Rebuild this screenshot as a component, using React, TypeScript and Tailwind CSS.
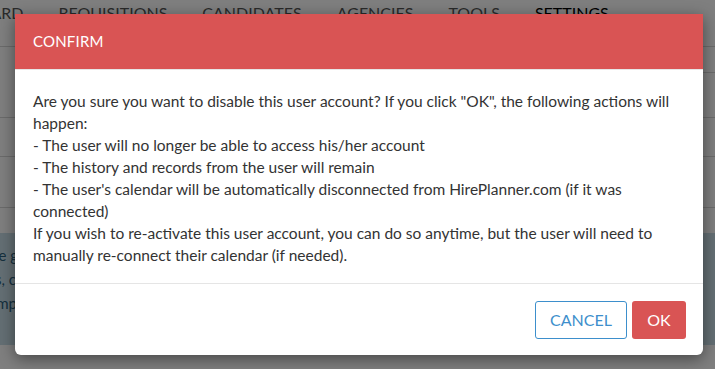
import React from 'react';

const navItems = ['DASHBOARD', 'REQUISITIONS', 'CANDIDATES', 'AGENCIES', 'TOOLS', 'SETTINGS'];

const messageLines = [
  'Are you sure you want to disable this user account? If you click "OK", the following actions will',
  'happen:',
  '- The user will no longer be able to access his/her account',
  '- The history and records from the user will remain',
  "- The user's calendar will be automatically disconnected from HirePlanner.com (if it was",
  'connected)',
  'If you wish to re-activate this user account, you can do so anytime, but the user will need to',
  'manually re-connect their calendar (if needed).',
];

const Background: React.FC = () => {
  return (
    <div className="w-[715px] h-[369px] bg-white overflow-hidden">
      <div className="h-[47px] border-b border-[#d6d6d6] flex items-start pt-[1px] gap-[35px] text-[16px] text-[#555] -ml-[76px]">
        {navItems.map((item) => (
          <span key={item} className={item === 'SETTINGS' ? 'text-black' : ''}>
            {item}
          </span>
        ))}
      </div>
      <div className="h-[26px] flex justify-end">
        <div className="w-[40px] border-b border-[#d6d6d6]" />
      </div>
      <div className="h-[45px] border-b border-[#d6d6d6]" />
      <div className="h-[39px] border-b border-[#d6d6d6]" />
      <div className="h-[51px] border-b border-[#d6d6d6]" />
      <div className="h-[25px]" />
      <div className="h-[112px] bg-[#c9dfe9] text-[#2c5f7c] text-[15px] leading-[24px] pt-[10px]">
        <div className="w-[18px] flex justify-end whitespace-nowrap">
          <span>configurer le g</span>
        </div>
        <div className="w-[16px] flex justify-end whitespace-nowrap">
          <span>les équipes, c</span>
        </div>
        <div className="w-[17px] flex justify-end whitespace-nowrap">
          <span>les champs comp</span>
        </div>
      </div>
    </div>
  );
};

export default function App() {
  return (
    <div className="relative w-[715px] h-[369px] overflow-hidden" style={{ fontFamily: 'Lato, "Open Sans", sans-serif' }}>
      <Background />
      <div className="absolute inset-0 bg-black/50" />
      <div className="absolute left-[15px] top-[14px] w-[688px] bg-white rounded-b-[6px] shadow-[0_4px_16px_rgba(0,0,0,0.45)]">
        <div className="h-[56px] bg-[#d95454] flex items-center px-[18px] border-b border-[#e6e6e6]">
          <span className="text-white text-[15px] tracking-[0.2px]">CONFIRM</span>
        </div>
        <div className="pl-[18px] pr-[18px] pt-[20px] pb-[17px] text-[15.5px] leading-[22px] text-[#333]">
          {messageLines.map((line, i) => (
            <div key={i} className="whitespace-nowrap">
              {line}
            </div>
          ))}
        </div>
        <div className="border-t border-[#e5e5e5] flex justify-end gap-[5px] pt-[17px] pb-[16px] pr-[17px]">
          <button className="w-[92px] h-[38px] border border-[#3d8fcc] rounded-[3px] bg-white text-[#3d8fcc] text-[16px]">
            CANCEL
          </button>
          <button className="w-[54px] h-[38px] rounded-[3px] bg-[#d95454] text-white text-[16px]">
            OK
          </button>
        </div>
      </div>
    </div>
  );
}
